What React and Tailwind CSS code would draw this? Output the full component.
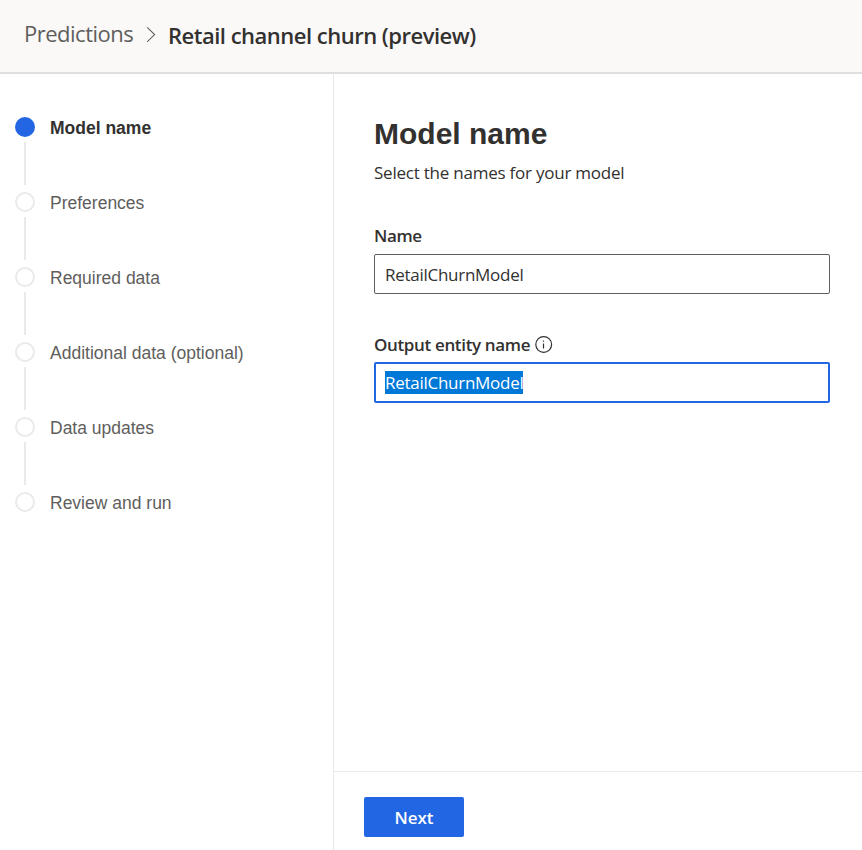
const steps = [
  'Model name',
  'Preferences',
  'Required data',
  'Additional data (optional)',
  'Data updates',
  'Review and run',
];

function Header() {
  return (
    <header className="flex h-[74px] shrink-0 items-start border-b-2 border-[#e1dfdd] bg-[#faf9f8] pl-6 whitespace-nowrap">
      <span className="mt-[17px] w-[110px] text-[22px] leading-8 tracking-[-0.5px] text-[#605e5c]">Predictions</span>
      <svg className="mt-[26px] ml-3 h-4 w-[10px]" viewBox="0 0 10 16" fill="none" stroke="#605e5c" strokeWidth="1.1">
        <path d="M1.2 1.4 8.6 8.6 1.2 15.8" />
      </svg>
      <h1 className="mt-[19px] ml-3 text-[22px] leading-8 font-semibold tracking-[-0.5px] text-[#323130]">
        Retail channel churn (preview)
      </h1>
    </header>
  );
}

function Step({ label, active, last }) {
  return (
    <li className="flex h-[75px] gap-[15px]">
      <div className="flex w-5 flex-col items-center">
        <span
          className={
            active
              ? 'size-5 shrink-0 rounded-full bg-[#2266e3]'
              : 'size-5 shrink-0 rounded-full border-2 border-[#eaeaea]'
          }
        />
        {!last && <span className="mt-[5px] h-[43px] w-[2px] bg-[#eaeaea]" />}
      </div>
      <span
        className={
          active
            ? 'text-[17.5px] leading-[22px] font-bold text-[#323130]'
            : 'text-[17.5px] leading-[22px] text-[#605e5c]'
        }
      >
        {label}
      </span>
    </li>
  );
}

function InfoIcon() {
  return (
    <svg className="ml-[5px] size-[18px]" viewBox="0 0 18 18" fill="none" stroke="#323130" strokeWidth="1.2">
      <circle cx="8.7" cy="8.5" r="7.9" />
      <path d="M8.5 7.5v5M8.5 4.5v1.3" />
    </svg>
  );
}

export default function App() {
  return (
    <div className="flex h-[850px] w-[862px] flex-col overflow-hidden bg-white font-['Open_Sans',sans-serif] text-[#323130]">
      <Header />
      <div className="flex flex-1">
        <nav className="w-[334px] shrink-0 border-r border-[#eaeaea] pt-[43px] pl-[15px] font-['Liberation_Sans',sans-serif]">
          <ol>
            {steps.map((label, i) => (
              <Step key={label} label={label} active={i === 0} last={i === steps.length - 1} />
            ))}
          </ol>
        </nav>
        <main className="flex flex-1 flex-col">
          <section className="flex-1 pt-[40px] pr-8 pl-10 whitespace-nowrap">
            <h2 className="font-['Liberation_Sans',sans-serif] text-[30px] leading-10 font-bold">Model name</h2>
            <p className="mt-[7px] text-[17px] leading-6 tracking-[-0.23px]">Select the names for your model</p>
            <div className="mt-[39px] text-[17px] leading-6 font-semibold tracking-[-0.35px]">Name</div>
            <div className="mt-[6px] flex h-10 items-center rounded-[2px] border border-[#605e5c] pt-px pl-[10px] text-[17px] tracking-[-0.27px]">
              RetailChurnModel
            </div>
            <div className="mt-[39px] flex items-center text-[17px] leading-6 font-semibold tracking-[-0.35px]">
              <span className="w-[156px]">Output entity name</span>
              <InfoIcon />
            </div>
            <div className="mt-[5px] flex h-[41px] items-center rounded-[2px] border-2 border-[#2266e3] pl-[9px] text-[17px] tracking-[-0.27px]">
              <span className="h-[23px] w-[138px] bg-[#0078d7] leading-[24px] text-white">RetailChurnModel</span>
            </div>
          </section>
          <footer className="h-[79px] border-t border-[#eaeaea] pt-[25px] pl-[30px]">
            <button className="flex h-10 w-[100px] items-center justify-center rounded-[2px] bg-[#2266e3] pt-px text-[17px] font-semibold text-white">
              Next
            </button>
          </footer>
        </main>
      </div>
    </div>
  );
}
